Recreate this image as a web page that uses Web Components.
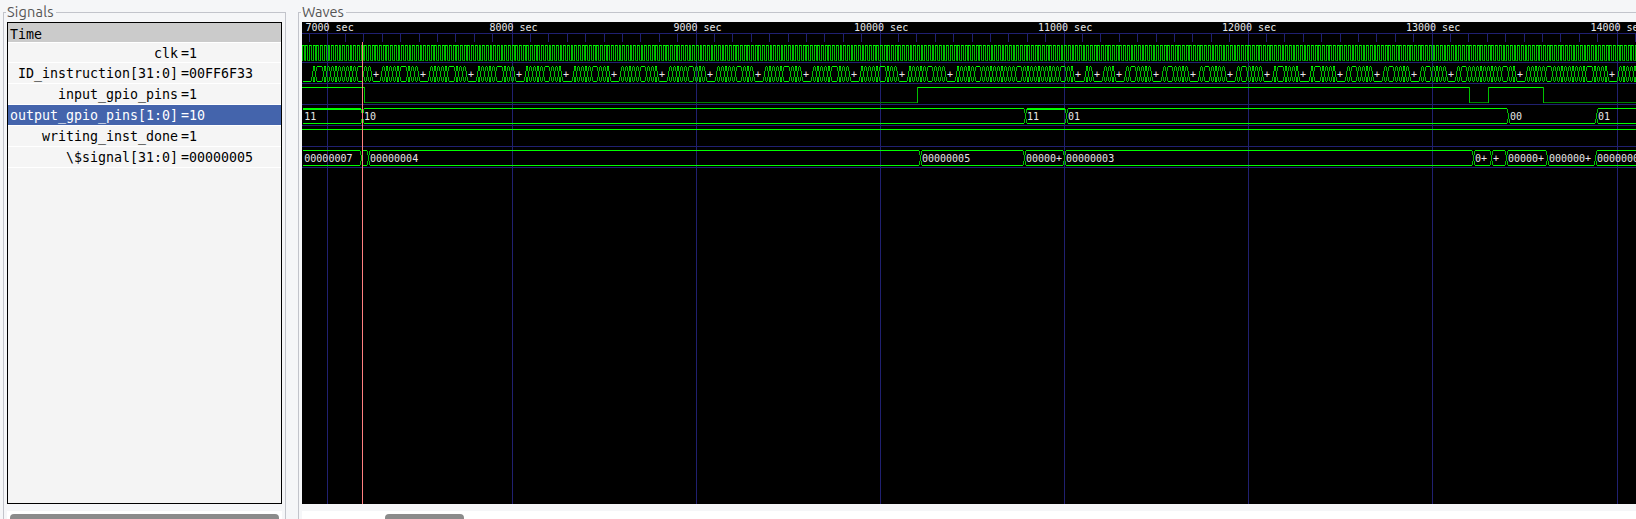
<!DOCTYPE html>
<html lang="en"><head><meta charset="utf-8"><title>Waves</title>
<style>html,body{margin:0;height:100%;overflow:hidden;background:#f5f6f8}</style></head>
<body><wave-viewer></wave-viewer>
<script>
class TitledFrame extends HTMLElement{
 constructor(){super();this.attachShadow({mode:'open'}).innerHTML=`<style>
 :host{display:grid;grid-template-rows:22px 1fr;box-sizing:border-box;position:relative;min-width:0}
 .edge{position:absolute;inset:12px 0 -10px 0;border:1px solid #c2c4cb}
 .title{font:14.5px/22px Ubuntu,"Noto Sans","Open Sans",sans-serif;color:#555;padding:1px 0 0 3px;height:21px;z-index:1;letter-spacing:var(--title-spacing,0)}
 .title span{background:#f5f6f8;padding:0 2px 0 1px;display:inline-block;height:20px}
 .body{padding:0 4px;z-index:1;min-width:0}
 </style><div class="edge"></div><div class="title"><span>${this.getAttribute('label')}</span></div><div class="body"><slot></slot></div>`}
}
customElements.define('titled-frame',TitledFrame);

class SignalRow extends HTMLElement{
 constructor(){super();this.attachShadow({mode:'open'}).innerHTML=`<style>
 :host{display:grid;grid-template-columns:170px 1fr;gap:3px;height:20px;background:#f5f5f5;border-bottom:1px solid #fff;font:13.3px/21px "DejaVu Sans Mono",monospace;color:#000;white-space:pre}
 :host([head]){background:#cbcbcb}:host([head]),:host([short]){height:19px}:host([selected]){background:#4464ac;color:#fff}
 .n{text-align:right}:host([head]) .n{text-align:left;line-height:23px;padding-left:2px}
 </style><span class="n">${this.getAttribute('name')}</span><span>${this.getAttribute('value')||''}</span>`}
}
customElements.define('signal-row',SignalRow);

class ScrollBar extends HTMLElement{
 constructor(){super();this.attachShadow({mode:'open'}).innerHTML=`<style>
 :host{display:block;height:8px;margin-top:7px;background:#fff;padding-top:3px;box-sizing:border-box;overflow:hidden}
 div{height:8px;border-radius:4px 4px 0 0;background:#8b8b8b;margin-left:${this.getAttribute('start')}px;width:${this.getAttribute('size')}px}
 </style><div></div>`}
}
customElements.define('scroll-bar',ScrollBar);

class WaveCanvas extends HTMLElement{
 constructor(){super();
 const X0=302,Y0=22,o=[];
 const r=(x,y,w,h,c)=>o.push(`<rect x="${x-X0}" y="${y-Y0}" width="${w}" height="${h}" fill="${c}"/>`);
 const t=(x,y,s)=>o.push(`<text x="${x-X0}" y="${y-Y0}">${s}</text>`);
 const G='#00ff00',E='#00c000',L='#008000',B='#202070';
 const px=s=>Math.floor(327.87+(s-7000)*.18417);
 r(302,33,1334,1,B);
 for(let i=0;i<6;i++)r(302,62+21*i,1334,1,B);
 r(309,33,1,9,B);
 for(let s=7000;s<=14000;s+=1000){
  for(let k=1;k<10;k++)r(Math.floor(px(s)+k*18.417),33,1,9,B);
  r(px(s),22,1,482,B);t(px(s)-(s<8000?21.5:s<10000?22.6:s<14000?26:26.6),31,s+' sec')}
 // clock: one edge every 10 sec
 const edge=j=>Math.floor(328.03+j*1.8417);
 for(let j=-14;j<712;j++){const a=edge(j),b=edge(j+1),hi=j%2==0;
  if(a>=302)r(a,45,1,16,E);
  r(a,hi?45:60,b-a+(hi?1:0),1,hi?G:L)}
 const cross=(x,y,ls,rs)=>{
  for(const [on,s] of [[ls,-1],[rs,1]]){
   if(on)r(x+s*2,y,1,1,G);r(x+s*2,y+15,1,1,G);
   if(on)r(x+s,y+1,1,4,E);
   r(x+s,y+11,1,4,E)}
  if(ls||rs)r(x,y+5,1,6,E);else r(x,y+8,1,3,E)};
 const bus=(y,list)=>{list.forEach(([x,kind,label],i)=>{
   const end=i+1<list.length?list[i+1][0]:1640;
   const a=x+(i?2:0),w=end-2-a;
   if(w>0){if(kind)r(a,y,w+1,kind,G);r(a,y+15,w+1,1,G)}
   if(i){const p=list[i-1][1];cross(x,y,p,kind)}
   if(label)t(x+(i?2:1.3),y+12,label)})};
 const C=3.684,ins=[[303,0]];
 const grp=(s,n,skip)=>{for(let i=0;i<=n;i++)if(!skip.includes(i))ins.push([Math.round(s+i*C),i==n?0:1,i==n?'+':''])};
 grp(311.7,16,[2,13]);
 for(let k=0;k<12;k++)grp(381+k*47.88,10,[6]);
 grp(955.6,32,[6,17,29]);grp(1084.8,2,[]);grp(1103.2,3,[]);
 for(let k=0;k<9;k++)grp(1125.3+k*36.84,7,[2]);
 grp(1456.4,16,[2,13]);grp(1526.4,22,[6,17]);grp(1618,9,[6]);
 ins.pop();ins.pop();ins.pop();
 bus(66,ins);
 const lvl=[[302,1],[364,0],[917,1],[1469,0],[1488,1],[1543,0],[1636,0]];
 lvl.slice(0,-1).forEach(([x,v],i)=>{r(x,v?87:102,lvl[i+1][0]-x+(v?1:0),1,v?G:L);if(i&&i<5||i==5)r(x,87,1,16,E)});
 bus(108,[[303,2,'11'],[362,1,'10'],[1025,2,'11'],[1066,1,'01'],[1508,0,'00'],[1596,1,'01']]);
 r(302,129,1334,1,G);
 bus(150,[[303,1,'00000007'],[361,1],[368,1,'00000004'],[920,1,'00000005'],[1024,1,'00000+'],[1064,1,'00000003'],[1473,1,'0+'],[1491,1,'+'],[1506,1,'00000+'],[1547,0,'000000+'],[1595,1,'00000003']]);
 r(362,42,1,462,'#ff8080');
 this.attachShadow({mode:'open'}).innerHTML=`<style>:host{display:block;height:482px;background:#000;overflow:hidden}svg{display:block}text{font:10px "DejaVu Sans Mono",monospace;fill:#e8e8e8;white-space:pre}</style><svg width="1334" height="482" shape-rendering="crispEdges">${o.join('')}</svg>`}
}
customElements.define('wave-canvas',WaveCanvas);

class WaveViewer extends HTMLElement{
 constructor(){super();this.attachShadow({mode:'open'}).innerHTML=`<style>
 :host{display:grid;grid-template-columns:283px 1fr;gap:12px;padding-left:3px;height:519px;overflow:hidden;box-sizing:border-box}
 .list{height:482px;border:1px solid #000;background:#f4f4f4;box-sizing:border-box}
 .list signal-row{box-sizing:content-box}
 titled-frame:first-of-type{--title-spacing:.2px}
 titled-frame:last-child{margin-right:-5px}
 </style>
 <titled-frame label="Signals"><div class="list">
 <signal-row head name="Time"></signal-row><signal-row short name="clk" value="=1"></signal-row>
 <signal-row name="ID_instruction[31:0]" value="=00FF6F33"></signal-row><signal-row name="input_gpio_pins" value="=1"></signal-row>
 <signal-row selected name="output_gpio_pins[1:0]" value="=10"></signal-row><signal-row name="writing_inst_done" value="=1"></signal-row>
 <signal-row name="\\$signal[31:0]" value="=00000005"></signal-row></div>
 <scroll-bar start="3" size="269"></scroll-bar></titled-frame>
 <titled-frame label="Waves"><wave-canvas></wave-canvas><scroll-bar start="83" size="79"></scroll-bar></titled-frame>`}
}
customElements.define('wave-viewer',WaveViewer);
</script></body></html>
